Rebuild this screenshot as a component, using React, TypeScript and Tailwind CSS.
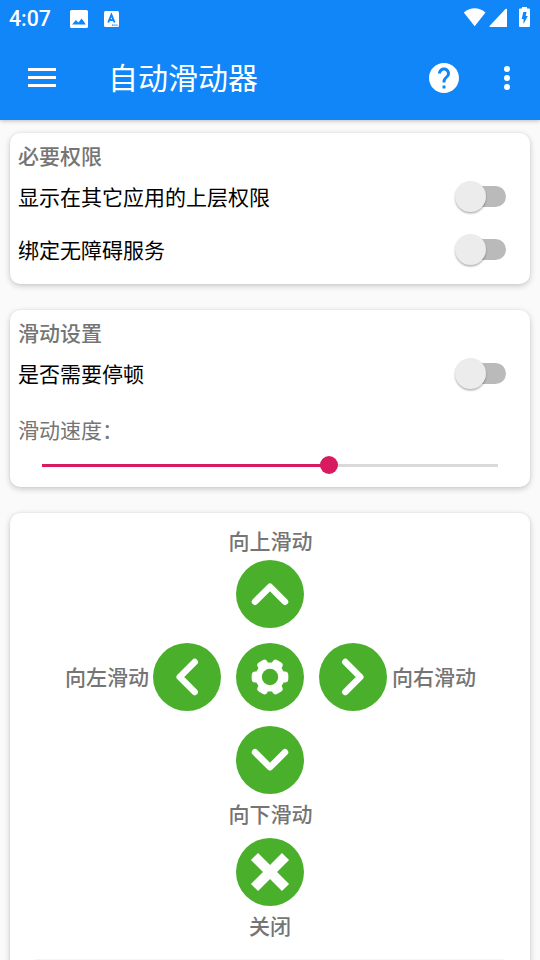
import React, { useState } from 'react';

function StatusBar() {
  return (
    <div className="flex h-9 items-center justify-between pl-[9px] pr-2.5 text-white">
      <div className="flex items-center">
        <span className="w-[60.500px] pt-px font-[Roboto,sans-serif] text-[21.300px] font-medium leading-9">4:07</span>
        <svg className="mt-px" width="18" height="18" viewBox="0 0 17 18" preserveAspectRatio="none">
          <path fillRule="evenodd" fill="currentColor" d="M2 0H15.500Q17 0 17 1.500V16.500Q17 18 15.500 18H1.500Q0 18 0 16.500V1.500Q0 0 1.500 0ZM2 14.500H15L11 8.500L8 12.500L5.500 10Z" />
        </svg>
        <svg className="ml-4 mt-px" width="15" height="16" viewBox="0 0 15 16">
          <rect width="15" height="16" rx="1.500" fill="currentColor" />
          <path d="M4.200 11.500L7.400 3.800L10.600 11.500M5.200 9H9.600" fill="none" stroke="#1086f8" strokeWidth="1.900" />
          <path d="M8 14.200H9.500M10.300 14.200H11.500M12.300 14.200H13.500" stroke="#1086f8" strokeWidth="1.200" />
        </svg>
      </div>
      <div className="-mt-0.5 flex items-center">
        <svg width="24" height="20" viewBox="0 0 24 20" fill="currentColor">
          <path d="M0.800 5.500Q11.500 -2.800 22.500 5.500L11.700 19.300Z" />
        </svg>
        <svg className="ml-[2px]" width="18" height="20" viewBox="0 0 18 20" fill="currentColor">
          <path d="M18 2V20H1.500Q-0.500 20 1 18.500L16 2.500Q17 1.500 18 2Z" />
        </svg>
        <svg className="ml-3" width="11" height="20" viewBox="0 0 11 20">
          <path fill="currentColor" d="M3 0H8V1.500H10Q11 1.500 11 2.500V19Q11 20 10 20H1Q0 20 0 19V2.500Q0 1.500 1 1.500H3Z" />
          <path fill="#1086f8" d="M4.300 5H7.500L6.700 9H8.800L4.500 17V12H2.700Z" />
        </svg>
      </div>
    </div>
  );
}

function Toolbar() {
  return (
    <div className="flex h-[84px] items-center pl-7 pr-[30px] text-white">
      <button className="-mt-px flex w-20 flex-col gap-[5px]">
        <span className="h-[3px] w-7 bg-white" />
        <span className="h-[3px] w-7 bg-white" />
        <span className="h-[3px] w-7 bg-white" />
      </button>
      <h1 className="-mt-1 flex-1 text-[30px] leading-[44px]">自动滑动器</h1>
      <button>
        <svg width="30" height="30" viewBox="2 2 20 20" fill="currentColor">
          <path d="M12 2C6.480 2 2 6.480 2 12s4.480 10 10 10 10-4.480 10-10S17.520 2 12 2zm1 17h-2v-2h2v2zm2.070-7.750l-.9.920C13.450 12.900 13 13.500 13 15h-2v-.5c0-1.100.45-2.100 1.170-2.830l1.240-1.260c.37-.36.59-.86.59-1.410 0-1.100-.9-2-2-2s-2 .9-2 2H8c0-2.210 1.790-4 4-4s4 1.790 4 4c0 .88-.36 1.680-.93 2.250z" />
        </svg>
      </button>
      <button className="ml-[45px] flex flex-col gap-[3px]">
        <span className="size-1.5 rounded-full bg-white" />
        <span className="size-1.5 rounded-full bg-white" />
        <span className="size-1.5 rounded-full bg-white" />
      </button>
    </div>
  );
}

function Card({ className = '', children }: { className?: string; children: React.ReactNode }) {
  return (
    <section className={`rounded-[10px] bg-white shadow-[0_2px_6px_rgba(0,0,0,0.2),0_0_2px_rgba(0,0,0,0.08)] ${className}`}>
      {children}
    </section>
  );
}

function SwitchRow({ label }: { label: string }) {
  const [checked, setChecked] = useState(false);

  return (
    <div className="flex h-[53px] items-center justify-between pr-6">
      <span className="pb-px text-black">{label}</span>
      <button role="switch" aria-checked={checked} onClick={() => setChecked(!checked)} className="pl-1 pb-px">
        <span className={`flex h-[21px] w-[47px] items-center rounded-full ${checked ? 'justify-end bg-[#f0a3bd]' : 'bg-[#bababa]'}`}>
          <span className={`size-[31px] shrink-0 rounded-full shadow-[0_1.5px_2px_rgba(0,0,0,0.3)] ${checked ? 'bg-[#d81b60]' : '-ml-1 bg-[#ececec]'}`} />
        </span>
      </button>
    </div>
  );
}

function SpeedSlider() {
  const value = 63;

  return (
    <div className="mx-8 flex h-[18px] items-center">
      <span className="h-[3px] bg-[#d81b60]" style={{ width: `${value}%` }} />
      <span className="-mx-[9px] size-[18px] shrink-0 rounded-full bg-[#d81b60] z-10" />
      <span className="h-[3px] flex-1 bg-[#dadada]" />
    </div>
  );
}

function RoundButton({ children }: { children: React.ReactNode }) {
  return (
    <button className="size-[68px] shrink-0 rounded-full bg-[#4ab02c]">
      <svg width="68" height="68" viewBox="-34 -34 68 68" fill="none">
        {children}
      </svg>
    </button>
  );
}

function Chevron({ angle }: { angle: number }) {
  return (
    <g transform={`rotate(${angle})`}>
      <path d="M-15 7.700L0 -7.300L15 7.700" stroke="white" strokeWidth="6.500" strokeLinecap="round" strokeLinejoin="round" />
    </g>
  );
}

function Gear() {
  return (
    <>
      <g fill="white">
        <circle r="14.500" />
        <rect x="-18.300" y="-5.500" width="36.600" height="11" rx="3.500" />
        <rect x="-18.300" y="-5.500" width="36.600" height="11" rx="3.500" transform="rotate(60)" />
        <rect x="-18.300" y="-5.500" width="36.600" height="11" rx="3.500" transform="rotate(120)" />
      </g>
      <circle r="8.200" fill="#4ab02c" />
    </>
  );
}

export default function App() {
  return (
    <div className="h-[960px] w-[540px] overflow-hidden bg-[#fafafa] font-['Noto_Sans_CJK_SC',sans-serif] text-[21px] leading-[30px] text-[#757575]">
      <header className="relative h-[120px] bg-[#1086f8] shadow-[0_1px_4px_rgba(0,0,0,0.25)]">
        <StatusBar />
        <Toolbar />
      </header>

      <main className="px-2.5 pt-[13px]">
        <Card className="h-[151px] pl-2 pt-[7px]">
          <h2 className="h-[30px] font-medium">必要权限</h2>
          <SwitchRow label="显示在其它应用的上层权限" />
          <SwitchRow label="绑定无障碍服务" />
        </Card>

        <Card className="mt-[26px] h-[177px] pt-[7px]">
          <div className="pl-2">
            <h2 className="h-[30px] font-medium">滑动设置</h2>
            <SwitchRow label="是否需要停顿" />
            <p className="mt-[14px] mb-3">滑动速度：</p>
          </div>
          <SpeedSlider />
        </Card>

        <Card className="mt-[26px] flex h-[520px] flex-col items-center pt-3 font-medium">
          <span className="h-[35px] pl-px">向上滑动</span>
          <RoundButton><Chevron angle={0} /></RoundButton>
          <div className="my-[15px] flex items-center gap-[15px]">
            <div className="flex items-center">
              <span className="w-[88px] pb-0.5">向左滑动</span>
              <RoundButton><Chevron angle={-90} /></RoundButton>
            </div>
            <RoundButton><Gear /></RoundButton>
            <div className="flex items-center">
              <RoundButton><Chevron angle={90} /></RoundButton>
              <span className="w-[88px] pb-0.5 pl-[5px] whitespace-nowrap">向右滑动</span>
            </div>
          </div>
          <RoundButton><Chevron angle={180} /></RoundButton>
          <span className="mt-1 h-10 pl-px">向下滑动</span>
          <RoundButton>
            <path d="M-15.500 -15.500L15.500 15.500M15.500 -15.500L-15.500 15.500" stroke="white" strokeWidth="10" />
          </RoundButton>
          <span className="mt-1">关闭</span>
          <div className="mt-[19px] h-px w-[470px] bg-[#f5f5f5]" />
        </Card>
      </main>
    </div>
  );
}
